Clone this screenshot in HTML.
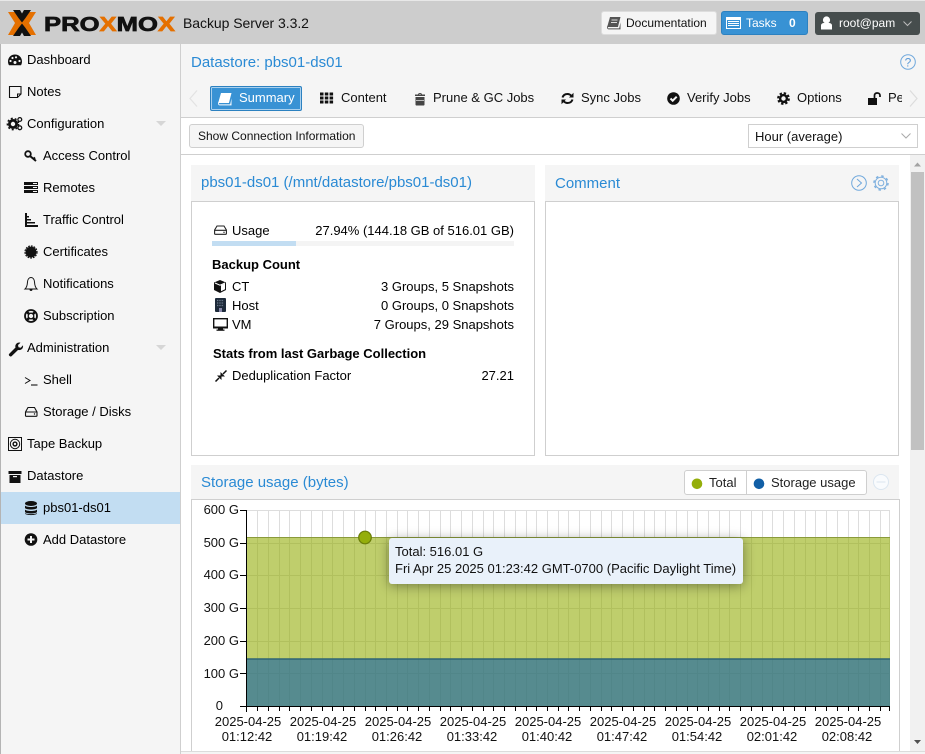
<!DOCTYPE html>
<html><head><meta charset="utf-8"><title>Proxmox Backup Server</title>
<style>
html,body{margin:0;padding:0;width:925px;height:754px;overflow:hidden;background:#f5f5f5;font-family:"Liberation Sans",Arial,sans-serif;font-size:13px;color:#000}
.a{position:absolute}
.t{position:absolute;white-space:nowrap;line-height:16px}
.r{text-align:right}
.b{font-weight:bold}
.h{color:#2a8ad4;font-size:15px;line-height:18px}
svg.i{position:absolute;overflow:visible}
</style></head><body>
<!-- header -->
<div class="a" style="left:0;top:0;width:925px;height:1px;background:#e8e8e8"></div>
<div class="a" style="left:0;top:1px;width:925px;height:43px;background:#cdcdcd"></div>
<svg class="i" style="left:0;top:0" width="180" height="44">
<polygon fill="#e57000" points="8,12 16,12 23,23 16,35 8,35 15,23"/>
<polygon fill="#e57000" points="36,12 28,12 21,23 28,35 36,35 29,23"/>
<polygon fill="#111" points="13,10 20,10 22,13.5 24,10 31,10 25.5,18 22,22.5 18.5,18"/>
<polygon fill="#111" points="13,36 20,36 22,32.5 24,36 31,36 25.5,28 22,23.5 18.5,28"/>
<text x="44" y="31" font-family="Liberation Sans" font-weight="bold" font-size="20" textLength="131" lengthAdjust="spacingAndGlyphs" stroke-width=".7" stroke="#111" fill="#111">PRO<tspan fill="#e57000" stroke="#e57000">X</tspan>MO<tspan fill="#e57000" stroke="#e57000">X</tspan></text>
</svg>
<div class="t" style="left:183px;top:15px;font-size:14px;letter-spacing:-.05px;color:#111">Backup Server 3.3.2</div>
<div class="a" style="left:601px;top:11px;width:116px;height:24px;background:#f5f5f5;border:1px solid #ddd;border-radius:3px;box-sizing:border-box"></div>
<svg class="i" style="left:607px;top:16px" width="14" height="14"><path fill="#555" d="M3 1h10.5l-2.6 10H1.500C.7 11 .6 12.4 1.6 12.4h10.6l1.300-6v7H1.700C-.3 13.4-.2 10.5.6 9.5z"/><path stroke="#ddd" d="M4.500 4h6M4 6.500h6"/></svg>
<div class="t" style="left:626px;top:15px;font-size:12px;color:#111">Documentation</div>
<div class="a" style="left:721px;top:11px;width:87px;height:24px;background:#3892d4;border:1px solid #2c81c0;border-radius:3px;box-sizing:border-box"></div>
<svg class="i" style="left:726px;top:17px" width="15" height="12"><rect width="15" height="12" fill="#fff"/><rect x="1" y="3" width="13" height="8" fill="#3892d4"/><path stroke="#fff" d="M2 4.500h11M2 6.500h11M2 8.500h11"/></svg>
<div class="t" style="left:746px;top:15px;font-size:12px;color:#fff">Tasks</div>
<div class="t b" style="left:789px;top:15px;font-size:12px;color:#fff">0</div>
<div class="a" style="left:815px;top:12px;width:105px;height:23px;background:#464d4d;border-radius:3px"></div>
<svg class="i" style="left:820px;top:16px" width="13" height="14"><circle cx="6.500" cy="4" r="3.600" fill="#fff"/><path fill="#fff" d="M1 13.500V9.500C1 7.500 3 7 4 7h5c1 0 3 .5 3 2.500v4z"/></svg>
<div class="t" style="left:839px;top:15px;font-size:12px;color:#fff">root@pam</div>
<svg class="i" style="left:903px;top:21px" width="9" height="6"><path fill="none" stroke="#bbb" d="M.5.500l4 4 4-4"/></svg>

<!-- sidebar -->
<div class="a" style="left:0;top:44px;width:1px;height:710px;background:#b4b4b4"></div>
<div class="a" style="left:180px;top:44px;width:1px;height:710px;background:#cfcfcf"></div>
<div class="a" style="left:1px;top:492px;width:179px;height:32px;background:#c2ddf2"></div>
<div class="t" style="left:27px;top:52px">Dashboard</div>
<div class="t" style="left:27px;top:84px">Notes</div>
<div class="t" style="left:27px;top:116px">Configuration</div>
<div class="t" style="left:43px;top:148px">Access Control</div>
<div class="t" style="left:43px;top:180px">Remotes</div>
<div class="t" style="left:43px;top:212px">Traffic Control</div>
<div class="t" style="left:43px;top:244px">Certificates</div>
<div class="t" style="left:43px;top:276px">Notifications</div>
<div class="t" style="left:43px;top:308px">Subscription</div>
<div class="t" style="left:27px;top:340px">Administration</div>
<div class="t" style="left:43px;top:372px">Shell</div>
<div class="t" style="left:43px;top:404px">Storage / Disks</div>
<div class="t" style="left:27px;top:436px">Tape Backup</div>
<div class="t" style="left:27px;top:468px">Datastore</div>
<div class="t" style="left:43px;top:500px">pbs01-ds01</div>
<div class="t" style="left:43px;top:532px">Add Datastore</div>
<svg class="i" style="left:0;top:0" width="181" height="564">
<!-- dashboard -->
<path fill="#111" d="M15 54.500c-4 0-7 3-7 7 0 1.300.3 2.500 1 3.800h12c.7-1.300 1-2.500 1-3.800 0-4-3-7-7-7z"/>
<g fill="#f5f5f5"><circle cx="10.500" cy="61" r="1.100"/><circle cx="12.500" cy="58" r="1.100"/><circle cx="16" cy="57.300" r="1.100"/><circle cx="19.500" cy="61" r="1.100"/><circle cx="15" cy="62.500" r="1.500"/></g>
<!-- notes -->
<path fill="none" stroke="#111" stroke-width="1.100" d="M9.500 86.500h11.500v7.500l-3.500 3.500H9.500z"/><path fill="none" stroke="#111" d="M17.500 97.500v-3.500h3.500"/>
<!-- config gears -->
<circle cx="13" cy="124" r="3.600" fill="none" stroke="#111" stroke-width="2.800"/><circle cx="13" cy="124" r="5.600" fill="none" stroke="#111" stroke-width="1.500" stroke-dasharray="2 2"/>
<circle cx="19.800" cy="119.500" r="1.900" fill="none" stroke="#111" stroke-width="1.300"/><circle cx="19.800" cy="127.800" r="1.900" fill="none" stroke="#111" stroke-width="1.300"/>
<!-- key -->
<circle cx="28" cy="154" r="2.800" fill="none" stroke="#111" stroke-width="1.800"/><path stroke="#111" stroke-width="2" fill="none" d="M30 156l6 5M33.500 159l1.500-1.500"/>
<!-- remotes -->
<g fill="#111"><rect x="24" y="182" width="14" height="3"/><rect x="24" y="186" width="14" height="3"/><rect x="24" y="190" width="14" height="3"/></g><path stroke="#f5f5f5" d="M33 183.500h4M33 187.500h4M33 191.500h4"/>
<!-- traffic -->
<g fill="#111"><rect x="25" y="213" width="2" height="14"/><rect x="25" y="225" width="13" height="2"/><rect x="25" y="222" width="10" height="1.500"/><rect x="25" y="219" width="6" height="1.500"/><rect x="25" y="216" width="4" height="1.500"/></g>
<!-- certificate -->
<circle cx="31" cy="252" r="5.400" fill="#111"/><circle cx="31" cy="252" r="6" fill="none" stroke="#111" stroke-width="1.200" stroke-dasharray="1.800 1"/>
<!-- bell -->
<path fill="none" stroke="#111" d="M25 289h12c-1.800-1.500-2.300-4-2.500-7-.2-2.500-1.500-4.500-3.500-4.500s-3.300 2-3.500 4.500c-.2 3-.7 5.500-2.500 7z"/><path fill="#111" d="M29.500 289.500h3c0 1-.7 1.500-1.500 1.500s-1.500-.5-1.500-1.500z"/>
<!-- lifering -->
<circle cx="31" cy="316" r="6" fill="none" stroke="#111" stroke-width="1.800"/><circle cx="31" cy="316" r="2.800" fill="none" stroke="#111" stroke-width="1.300"/><path stroke="#111" stroke-width="2.600" d="M27 312l2 2M35 312l-2 2M27 320l2-2M35 320l-2-2"/>
<!-- wrench -->
<path fill="#111" d="M9 354l6.500-6.500c-.8-2.500 1-5 4-5l1 .2-2.500 2.300.5 2.200 2.200.5 2.300-2.500c.5 3-1.500 5.300-5 4.800l-6.500 6.300c-1 .8-3.300-.8-2.500-2.300z"/>
<!-- shell -->
<path fill="none" stroke="#111" d="M25 377.500l5 3-5 3"/><path stroke="#111" stroke-width="1.100" d="M31 385h6.500"/>
<!-- hdd -->
<path fill="none" stroke="#111" stroke-width="1.100" d="M25.500 415.500v-3.500l2.500-4.500h6.500l2.500 4.500v3.500c0 .5-.3.800-.8.800H26.300c-.5 0-.8-.3-.8-.8zM25.500 412h11.500"/><circle cx="34.500" cy="414" r=".7" fill="#111"/>
<!-- tape -->
<rect x="8.500" y="437.500" width="13" height="13" fill="none" stroke="#111"/><circle cx="15" cy="444" r="4.700" fill="none" stroke="#111"/><circle cx="15" cy="444" r="1.900" fill="none" stroke="#111" stroke-width="1.400"/>
<!-- archive -->
<rect x="8.500" y="471" width="13" height="3" fill="#111"/><rect x="9.500" y="475" width="11" height="8" fill="#111"/><rect x="13" y="476" width="4" height="1.200" fill="#f5f5f5"/>
<!-- database -->
<g fill="#111"><ellipse cx="31" cy="503.500" rx="6" ry="2.500"/><path d="M25 505.500c1 2 11 2 12 0v2.500c-1 2-11 2-12 0z"/><path d="M25 509.500c1 2 11 2 12 0v2.500c-1 2-11 2-12 0z"/><path d="M25 513c1 1.500 11 1.500 12 0v.5c-1 2.100-11 2.100-12 0z"/></g>
<!-- plus -->
<circle cx="31" cy="539.500" r="6.300" fill="#111"/><path stroke="#f5f5f5" stroke-width="2" d="M27.500 539.500h7M31 536v7"/>
<!-- tree triangles -->
<polygon fill="#d6d6d6" points="156,121 166,121 161,126"/><polygon fill="#d6d6d6" points="156,345 166,345 161,350"/>
</svg>

<!-- content header -->
<div class="a" style="left:181px;top:117px;width:744px;height:1px;background:#cfcfcf"></div>
<div class="t h" style="left:191px;top:54px">Datastore: pbs01-ds01</div>
<svg class="i" style="left:900px;top:54px" width="16" height="16"><circle cx="8" cy="8" r="7.300" fill="none" stroke="#6fa8dc"/><text x="8" y="12.500" font-size="12" text-anchor="middle" fill="#5b9ad8" font-family="Liberation Sans">?</text></svg>
<svg class="i" style="left:189px;top:90px" width="9" height="17"><path fill="none" stroke="#e2e2e2" stroke-width="1.200" d="M8 .5L1 8.500l7 8"/></svg>
<svg class="i" style="left:909px;top:90px" width="9" height="17"><path fill="none" stroke="#dcdcdc" stroke-width="1.200" d="M1 .5l7 8-7 8"/></svg>
<div class="a" style="left:210px;top:86px;width:92px;height:25px;background:#3892d4;border:1px solid #2c81c0;box-shadow:inset 0 0 0 1px #a9d0ee;box-sizing:border-box;border-radius:2px"></div>
<svg class="i" style="left:218px;top:92px" width="14" height="14"><path fill="#fff" d="M3 1h10.500l-2.600 10H1.500C.7 11 .6 12.400 1.600 12.400h10.600l1.300-6v7H1.700C-.3 13.400-.2 10.500.6 9.500z"/></svg>
<div class="t" style="left:239px;top:90px;color:#fff">Summary</div>
<div class="t" style="left:341px;top:90px;color:#111">Content</div>
<svg class="i" style="left:320px;top:92px" width="14" height="12"><path stroke="#111" stroke-width="3" stroke-dasharray="3.500 1.300" d="M0 2h14M0 6h14M0 10h14"/></svg>
<div class="t" style="left:433px;top:90px;color:#111">Prune &amp; GC Jobs</div>
<svg class="i" style="left:414px;top:92px" width="12" height="14"><path fill="#444" d="M1 2.500h10v1.500H1zM4 2.500c0-2 4-2 4 0H7c0-.7-2-.7-2 0zM1.500 5h9v7.500c0 .8-.5 1-1 1h-7c-.5 0-1-.2-1-1z"/><path stroke="#bbb" d="M2 8.500h8"/></svg>
<div class="t" style="left:581px;top:90px;color:#111">Sync Jobs</div>
<svg class="i" style="left:561px;top:92px" width="13" height="13"><path fill="none" stroke="#111" stroke-width="2" d="M1.500 5.500C2.300 3 4 2 6.500 2c1.800 0 3 .8 4 2M11.500 7.500C10.700 10 9 11 6.500 11c-1.800 0-3-.8-4-2"/><path fill="#111" d="M12.500 .8v4.700H8zM.500 12.200V7.500H5z"/></svg>
<div class="t" style="left:687px;top:90px;color:#111">Verify Jobs</div>
<svg class="i" style="left:667px;top:92px" width="13" height="13"><circle cx="6.500" cy="6.500" r="6.300" fill="#111"/><path fill="none" stroke="#f5f5f5" stroke-width="2" d="M3.500 6.500l2.200 2.200 4-4"/></svg>
<div class="t" style="left:797px;top:90px;color:#111">Options</div>
<svg class="i" style="left:777px;top:92px" width="13" height="13"><circle cx="6.500" cy="6.500" r="3.400" fill="none" stroke="#111" stroke-width="2.400"/><circle cx="6.500" cy="6.500" r="5.400" fill="none" stroke="#111" stroke-width="2" stroke-dasharray="2.400 1.850"/></svg>
<div class="a" style="left:869px;top:85px;width:33px;height:28px;overflow:hidden"><div class="t" style="left:19px;top:5px;color:#111">Permissions</div></div>
<svg class="i" style="left:868px;top:92px" width="13" height="13"><rect x="0" y="6" width="9" height="7" fill="#111"/><path fill="none" stroke="#111" stroke-width="1.700" d="M6.500 6V3.500C6.500 1.500 8 1 9.300 1s2.700.7 2.700 2.500V5"/></svg>

<!-- toolbar -->
<div class="a" style="left:181px;top:118px;width:744px;height:36px;background:#fff"></div>
<div class="a" style="left:181px;top:154px;width:744px;height:1px;background:#cfcfcf"></div>
<div class="a" style="left:189px;top:124px;width:175px;height:24px;background:#f5f5f5;border:1px solid #cfcfcf;border-radius:3px;box-sizing:border-box"></div>
<div class="t" style="left:198px;top:128px;font-size:12px;color:#111">Show Connection Information</div>
<div class="a" style="left:748px;top:124px;width:170px;height:24px;background:#fff;border:1px solid #cfcfcf;box-sizing:border-box"></div>
<div class="t" style="left:755px;top:129px;color:#111">Hour (average)</div>
<svg class="i" style="left:901px;top:133px" width="10" height="6"><path fill="none" stroke="#aaa" d="M.5.500l4.500 4.500 4.500-4.500"/></svg>

<!-- scroll area -->
<div class="a" style="left:181px;top:155px;width:729px;height:596px;background:#fff"></div>
<div class="a" style="left:910px;top:155px;width:15px;height:596px;background:#f1f1f1"></div>
<div class="a" style="left:911px;top:172px;width:13px;height:278px;background:#c1c1c1"></div>
<svg class="i" style="left:910px;top:155px" width="15" height="596"><polygon fill="#a3a3a3" points="4,11.500 11,11.500 7.500,7.500"/><polygon fill="#505050" points="4,585 11,585 7.500,589"/></svg>
<div class="a" style="left:181px;top:751px;width:744px;height:1px;background:#dcdcdc"></div>

<!-- summary panel -->
<div class="a" style="left:191px;top:165px;width:344px;height:36px;background:#f5f5f5"></div>
<div class="a" style="left:191px;top:201px;width:344px;height:255px;border:1px solid #cfcfcf;box-sizing:border-box;background:#fff"></div>
<div class="t h" style="left:201px;top:174px">pbs01-ds01 (/mnt/datastore/pbs01-ds01)</div>
<svg class="i" style="left:214px;top:225px" width="13" height="11"><path fill="none" stroke="#222" stroke-width="1.100" d="M.6 8.500V5L3 1h7l2.400 4v3.500c0 .5-.3.800-.8.800H1.400c-.5 0-.8-.3-.8-.8zM.6 5.300h11.800"/><circle cx="10" cy="7.300" r=".7" fill="#222"/></svg>
<div class="t" style="left:232px;top:223px">Usage</div>
<div class="t r" style="right:411px;top:223px">27.94% (144.18 GB of 516.01 GB)</div>
<div class="a" style="left:212px;top:241px;width:302px;height:5px;background:#f4f4f4"></div>
<div class="a" style="left:212px;top:241px;width:84px;height:5px;background:#c2ddf2"></div>
<div class="t b" style="left:212px;top:257px">Backup Count</div>
<svg class="i" style="left:214px;top:280px" width="12" height="13"><path fill="#111" d="M6 0l6 2.500V10l-6 3-6-3V2.500z"/><path fill="#fff" d="M7 5.200l4-1.700V9.300l-4 2z"/><path stroke="#fff" d="M1 3l5 2.200L11 3" fill="none"/></svg>
<div class="t" style="left:232px;top:279px">CT</div>
<div class="t r" style="right:411px;top:279px">3 Groups, 5 Snapshots</div>
<svg class="i" style="left:215px;top:298px" width="11" height="14"><rect width="11" height="14" rx="1" fill="#1d2a3a"/><path stroke="#6b7a8c" stroke-width="1.200" stroke-dasharray="1.300 1" d="M2 2.500h7M2 5h7M2 7.500h7"/><rect x="4" y="10" width="3" height="4" fill="#88a"/></svg>
<div class="t" style="left:232px;top:298px">Host</div>
<div class="t r" style="right:411px;top:298px">0 Groups, 0 Snapshots</div>
<svg class="i" style="left:213px;top:318px" width="15" height="13"><rect x=".7" y=".7" width="13.600" height="9" fill="#fff" stroke="#111" stroke-width="1.400"/><rect x="0" y="8.500" width="15" height="2" fill="#111"/><rect x="5" y="10" width="5" height="2" fill="#111"/><rect x="3.500" y="11.500" width="8" height="1.300" fill="#111"/></svg>
<div class="t" style="left:232px;top:317px">VM</div>
<div class="t r" style="right:411px;top:317px">7 Groups, 29 Snapshots</div>
<div class="t b" style="left:213px;top:346px">Stats from last Garbage Collection</div>
<svg class="i" style="left:215px;top:370px" width="12" height="12"><path stroke="#111" stroke-width="1.500" d="M.5 11.500L4 8M11.500.5L8 4"/><path fill="#111" d="M2 5.500h4.500V10zM10 6.500H5.500V2z"/></svg>
<div class="t" style="left:232px;top:368px">Deduplication Factor</div>
<div class="t r" style="right:411px;top:368px">27.21</div>

<!-- comment panel -->
<div class="a" style="left:545px;top:165px;width:354px;height:36px;background:#f5f5f5"></div>
<div class="a" style="left:545px;top:201px;width:354px;height:255px;border:1px solid #cfcfcf;box-sizing:border-box;background:#fff"></div>
<div class="t h" style="left:555px;top:175px">Comment</div>
<svg class="i" style="left:851px;top:175px" width="16" height="16"><circle cx="8" cy="8" r="7.300" fill="none" stroke="#6fa8dc" stroke-width="1"/><path fill="none" stroke="#6fa8dc" d="M6 4l4.500 4L6 12"/></svg>
<svg class="i" style="left:873px;top:175px" width="16" height="16"><circle cx="8" cy="8" r="2.800" fill="none" stroke="#7fb0de"/><circle cx="8" cy="8" r="5.800" fill="none" stroke="#7fb0de"/><circle cx="8" cy="8" r="7" fill="none" stroke="#7fb0de" stroke-width="1.500" stroke-dasharray="2.500 3"/></svg>

<!-- chart panel -->
<div class="a" style="left:191px;top:465px;width:708px;height:34px;background:#f5f5f5"></div>
<div class="a" style="left:191px;top:499px;width:709px;height:252px;border:1px solid #cfcfcf;border-bottom:0;box-sizing:border-box;background:#fff"></div>
<div class="t h" style="left:201px;top:474px">Storage usage (bytes)</div>
<div class="a" style="left:684px;top:470px;width:183px;height:25px;background:#fff;border:1px solid #cfcfcf;border-radius:3px;box-sizing:border-box"></div>
<div class="a" style="left:746px;top:471px;width:1px;height:23px;background:#cfcfcf"></div>
<svg class="i" style="left:690px;top:476px" width="80" height="14"><circle cx="7" cy="7.800" r="5.300" fill="#94ae0a"/><circle cx="69" cy="7.800" r="5.300" fill="#115fa6"/></svg>
<div class="t" style="left:709px;top:475px;color:#222">Total</div>
<div class="t" style="left:771px;top:475px;color:#222">Storage usage</div>
<svg class="i" style="left:873px;top:474px" width="16" height="16"><circle cx="8" cy="8" r="7.500" fill="#f9fbfd" stroke="#dbe6f0"/><path stroke="#dbe6f0" d="M3.500 8h9"/></svg>

<svg class="i" style="left:0;top:0;font-family:'Liberation Sans'" width="925" height="754">
<g stroke="#ddd" stroke-width="1" fill="none">
<path d="M246 510.500H890M246 543.500H890M246 575.500H890M246 608.500H890M246 641.500H890M246 673.500H890"/>
<path d="M257.500 510v196M268.500 510v196M279.500 510v196M289.500 510v196M300.500 510v196M311.500 510v196M322.500 510v196M332.500 510v196M343.500 510v196M354.500 510v196M365.500 510v196M375.500 510v196M386.500 510v196M397.500 510v196M407.500 510v196M418.500 510v196M429.500 510v196M440.500 510v196M450.500 510v196M461.500 510v196M472.500 510v196M483.500 510v196M493.500 510v196M504.500 510v196M515.500 510v196M526.500 510v196M536.500 510v196M547.500 510v196M558.500 510v196M568.500 510v196M579.500 510v196M590.500 510v196M601.500 510v196M611.500 510v196M622.500 510v196M633.500 510v196M644.500 510v196M654.500 510v196M665.500 510v196M676.500 510v196M687.500 510v196M697.500 510v196M708.500 510v196M719.500 510v196M729.500 510v196M740.500 510v196M751.500 510v196M762.500 510v196M772.500 510v196M783.500 510v196M794.500 510v196M805.500 510v196M815.500 510v196M826.500 510v196M837.500 510v196M848.500 510v196M858.500 510v196M869.500 510v196M880.500 510v196M889.500 510v196"/>
</g>
<rect x="246" y="537" width="644" height="169" fill="#94ae0a" opacity=".6"/>
<rect x="246" y="658.500" width="644" height="47.500" fill="#115fa6" opacity=".6"/>
<path d="M246 537.500H890" stroke="#8a9a3a" stroke-width="1" fill="none"/>
<path d="M246 659H890" stroke="#2f6475" stroke-width="1.500" fill="none"/>
<path d="M246.500 510V712M240 510.500h6M240 543.500h6M240 575.500h6M240 608.500h6M240 641.500h6M240 673.500h6M240 706.500h650" stroke="#000" fill="none"/>
<path stroke="#000" fill="none" d="M257.500 706v5M268.500 706v5M279.500 706v5M289.500 706v5M300.500 706v5M311.500 706v5M322.500 706v5M332.500 706v5M343.500 706v5M354.500 706v5M365.500 706v5M375.500 706v5M386.500 706v5M397.500 706v5M407.500 706v5M418.500 706v5M429.500 706v5M440.500 706v5M450.500 706v5M461.500 706v5M472.500 706v5M483.500 706v5M493.500 706v5M504.500 706v5M515.500 706v5M526.500 706v5M536.500 706v5M547.500 706v5M558.500 706v5M568.500 706v5M579.500 706v5M590.500 706v5M601.500 706v5M611.500 706v5M622.500 706v5M633.500 706v5M644.500 706v5M654.500 706v5M665.500 706v5M676.500 706v5M687.500 706v5M697.500 706v5M708.500 706v5M719.500 706v5M729.500 706v5M740.500 706v5M751.500 706v5M762.500 706v5M772.500 706v5M783.500 706v5M794.500 706v5M805.500 706v5M815.500 706v5M826.500 706v5M837.500 706v5M848.500 706v5M858.500 706v5M869.500 706v5M880.500 706v5M889.500 706v5"/>
<g font-size="13" fill="#111" text-anchor="end">
<text x="239" y="514">600 G</text><text x="239" y="547">500 G</text><text x="239" y="579">400 G</text><text x="239" y="612">300 G</text><text x="239" y="645">200 G</text><text x="239" y="678">100 G</text><text x="223" y="710">0</text>
</g>
<g font-size="13" fill="#111" text-anchor="middle">
<text x="248" y="726">2025-04-25</text><text x="247" y="741">01:12:42</text>
<text x="323" y="726">2025-04-25</text><text x="322" y="741">01:19:42</text>
<text x="398" y="726">2025-04-25</text><text x="397" y="741">01:26:42</text>
<text x="473" y="726">2025-04-25</text><text x="472" y="741">01:33:42</text>
<text x="548" y="726">2025-04-25</text><text x="547" y="741">01:40:42</text>
<text x="623" y="726">2025-04-25</text><text x="622" y="741">01:47:42</text>
<text x="698" y="726">2025-04-25</text><text x="697" y="741">01:54:42</text>
<text x="773" y="726">2025-04-25</text><text x="772" y="741">02:01:42</text>
<text x="848" y="726">2025-04-25</text><text x="847" y="741">02:08:42</text>
</g>
<circle cx="365" cy="537.500" r="6.300" fill="#94ae0a" stroke="#6a7d07" stroke-width="1.200"/>
</svg>
<!-- tooltip -->
<div class="a" style="left:389px;top:538px;width:354px;height:46px;background:#e9f1fa;border-radius:3px;box-shadow:0 2px 12px rgba(0,0,0,.4)"></div>
<div class="t" style="left:395px;top:544px;color:#111">Total: 516.01 G</div>
<div class="t" style="left:395px;top:561px;color:#111">Fri Apr 25 2025 01:23:42 GMT-0700 (Pacific Daylight Time)</div>
</body></html>
